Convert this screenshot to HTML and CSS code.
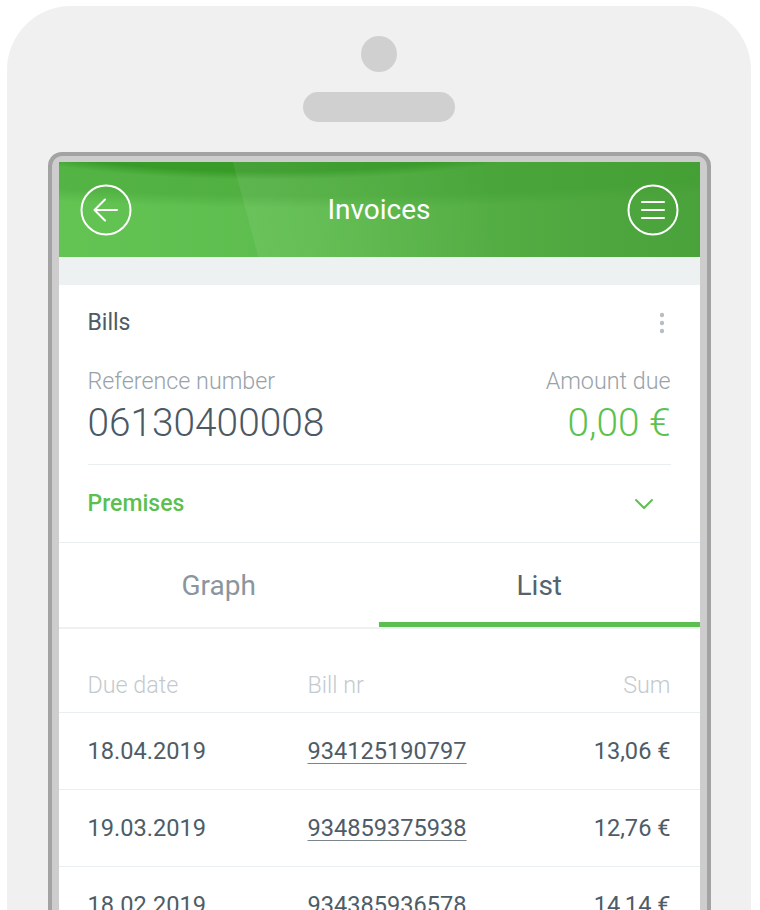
FILE: index.html
```html
<!DOCTYPE html>
<html lang="en">
<head>
<meta charset="utf-8">
<title>Invoices</title>
<link rel="stylesheet" href="styles.css">
</head>
<body>
<div class="phone">
  <div class="camera"></div>
  <div class="speaker"></div>
  <div class="frame">
    <div class="screen">
      <header class="appbar">
        <svg class="round-btn" width="52" height="52" viewBox="0 0 52 52" fill="none" stroke="#fff" stroke-width="2" stroke-linecap="round" stroke-linejoin="round">
          <circle cx="26" cy="26" r="24.5"/>
          <path d="M37 26H14.5M25 15.5L14.5 26L25 36.5"/>
        </svg>
        <h1 class="title">Invoices</h1>
        <svg class="round-btn" width="52" height="52" viewBox="0 0 52 52" fill="none" stroke="#fff" stroke-width="2" stroke-linecap="round">
          <circle cx="26" cy="26" r="24.5"/>
          <path d="M15 18H37M15 26H37M15 34H37"/>
        </svg>
      </header>
      <div class="strip"></div>
      <section class="card">
        <div class="card-head">
          <span class="card-title">Bills</span>
          <svg class="kebab" width="8" height="22" viewBox="0 0 8 22" fill="#b7bfc5">
            <circle cx="4" cy="3" r="2.2"/>
            <circle cx="4" cy="11" r="2.2"/>
            <circle cx="4" cy="19" r="2.2"/>
          </svg>
        </div>
        <div class="summary">
          <div class="sum-col">
            <span class="label">Reference number</span>
            <span class="big">06130400008</span>
          </div>
          <div class="sum-col right">
            <span class="label">Amount due</span>
            <span class="big green">0,00 €</span>
          </div>
        </div>
        <div class="premises">
          <span class="premises-label">Premises</span>
          <svg class="chevron" width="24" height="24" viewBox="0 0 24 24" fill="none" stroke="#5cbf4f" stroke-width="2" stroke-linecap="round" stroke-linejoin="round">
            <path d="M4 8L12 16L20 8"/>
          </svg>
        </div>
      </section>
      <nav class="tabs">
        <div class="tab">Graph</div>
        <div class="tab active">List</div>
      </nav>
      <div class="table">
        <div class="row head">
          <span>Due date</span>
          <span>Bill nr</span>
          <span class="num">Sum</span>
        </div>
        <div class="row">
          <span>18.04.2019</span>
          <span><a class="bill">934125190797</a></span>
          <span class="num">13,06 €</span>
        </div>
        <div class="row">
          <span>19.03.2019</span>
          <span><a class="bill">934859375938</a></span>
          <span class="num">12,76 €</span>
        </div>
        <div class="row">
          <span>18.02.2019</span>
          <span><a class="bill">934385936578</a></span>
          <span class="num">14,14 €</span>
        </div>
      </div>
    </div>
  </div>
</div>
</body>
</html>
```

FILE: styles.css
```css
* { box-sizing: border-box; }

html, body {
  margin: 0;
  padding: 0;
  background: #ffffff;
  height: 910px;
  overflow: hidden;
}

body {
  font-family: Roboto, "Liberation Sans", sans-serif;
}

.phone {
  margin: 6px 9px 0 7px;
  height: 1000px;
  border-radius: 64px 64px 0 0;
  background: #f0f0f0;
  display: flex;
  flex-direction: column;
  align-items: center;
  padding-top: 30px;
}

.camera {
  width: 36px;
  height: 36px;
  border-radius: 50%;
  background: #d0d0d0;
}

.speaker {
  width: 152px;
  height: 30px;
  border-radius: 15px;
  background: #d0d0d0;
  margin-top: 20px;
}

.frame {
  margin-top: 30px;
  width: 663px;
  border: 4px solid #a3a3a3;
  border-bottom: 0;
  border-radius: 14px 14px 0 0;
  background: #cdcdcd;
  padding: 6px 7px 0 7px;
}

.screen {
  width: 641px;
  background: #ffffff;
  display: flex;
  flex-direction: column;
}

.appbar {
  height: 95px;
  display: flex;
  align-items: center;
  padding: 0 21px;
  background:
    linear-gradient(75deg, rgba(255,255,255,0) 0 192px, rgba(255,255,255,0.07) 193px, rgba(255,255,255,0) 440px),
    radial-gradient(ellipse 460px 80px at 210px -40px, rgba(48,148,32,0.75) 0 62%, rgba(48,148,32,0) 72%),
    radial-gradient(ellipse 900px 120px at 260px -50px, rgba(60,155,45,0.4) 0 70%, rgba(60,155,45,0) 80%),
    linear-gradient(90deg, #63c454 0%, #5cbb4c 40%, #52ac42 70%, #4aa23a 100%);
}

.round-btn {
  flex: 0 0 52px;
  display: block;
}

.title {
  flex: 1;
  margin: 0;
  text-align: center;
  color: #ffffff;
  font-size: 28px;
  font-weight: 400;
  line-height: 32px;
}

.strip {
  height: 28px;
  background: #edf1f2;
}

.card {
  padding: 24px 29px 0 29px;
  border-bottom: 1px solid #e9eef0;
}

.card-head {
  display: flex;
  justify-content: space-between;
  align-items: center;
  height: 28px;
}

.card-title {
  font-size: 23px;
  color: #4d5b66;
  line-height: 28px;
}

.kebab {
  display: block;
  margin-right: 5px;
}

.summary {
  display: flex;
  justify-content: space-between;
  margin-top: 30px;
  padding-bottom: 19px;
  border-bottom: 1px solid #e9eef0;
}

.sum-col {
  display: flex;
  flex-direction: column;
  gap: 6px;
}

.sum-col.right {
  align-items: flex-end;
}

.label {
  font-size: 23.3px;
  font-weight: 300;
  color: #99a2a9;
  line-height: 28px;
}

.big {
  font-size: 38.8px;
  font-weight: 300;
  color: #4b5964;
  line-height: 44px;
}

.big.green {
  color: #5cc24f;
}

.premises {
  height: 77px;
  display: flex;
  align-items: center;
  justify-content: space-between;
}

.premises-label {
  font-size: 23px;
  font-weight: 500;
  color: #5cbf4f;
}

.chevron {
  display: block;
  margin-right: 15px;
}

.tabs {
  display: grid;
  grid-template-columns: 1fr 1fr;
  border-bottom: 2px solid #edf1f2;
}

.tab {
  height: 84px;
  display: flex;
  align-items: center;
  justify-content: center;
  font-size: 28px;
  color: #8b959d;
}

.tab.active {
  color: #56636e;
  box-shadow: inset 0 -5px 0 #5cbf50;
}

.table {
  display: flex;
  flex-direction: column;
}

.row {
  display: grid;
  grid-template-columns: 220px 1fr auto;
  align-items: center;
  height: 77px;
  padding: 0 29px;
  border-bottom: 1px solid #e9eef0;
  font-size: 23.6px;
  color: #4e5c67;
}

.row.head {
  height: 84px;
  padding-top: 28px;
  font-weight: 300;
  font-size: 23.3px;
  color: #c3cace;
}

.num {
  text-align: right;
}

.bill {
  color: #4e5c67;
  text-decoration: underline;
  text-decoration-color: #7a858e;
  text-decoration-thickness: 1px;
  text-underline-offset: 4px;
}
```
